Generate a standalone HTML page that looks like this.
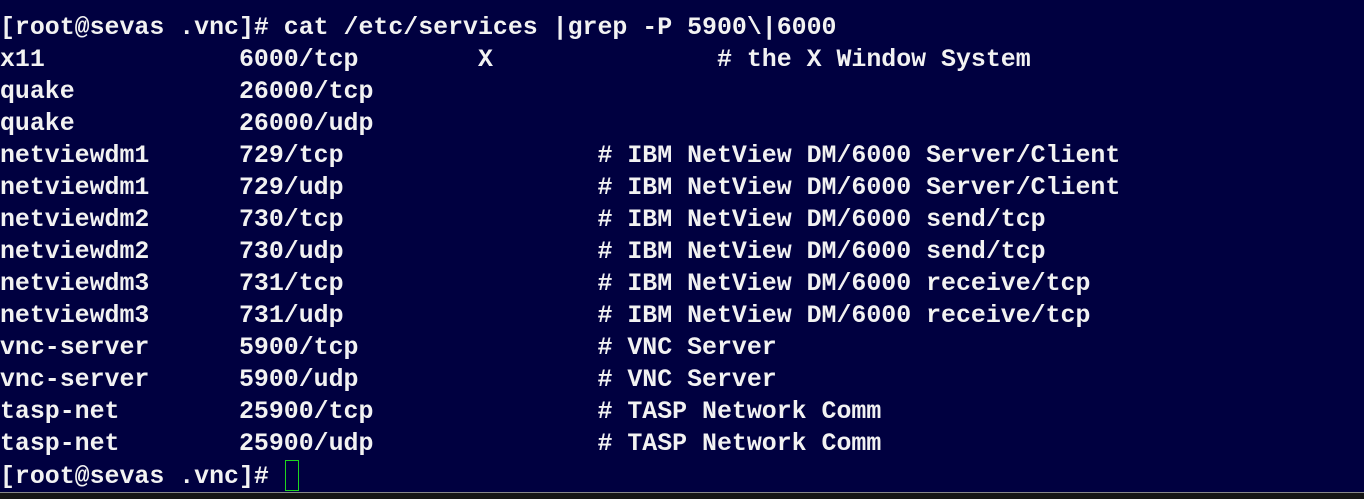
<!DOCTYPE html>
<html><head><style>
html,body{margin:0;padding:0;width:1364px;height:498px;overflow:hidden;background:#000040;}
pre{margin:0;padding:12px 0 0 0;font-family:"Liberation Mono",monospace;font-weight:bold;font-size:24.9px;line-height:32px;color:#f2f2f2;white-space:pre;}
.cur{display:inline-block;width:14px;height:31px;border:1px solid #1fd51f;vertical-align:-8px;box-sizing:border-box;margin-left:1px;}
.bot{position:absolute;left:0;top:492px;width:1364px;height:6px;background:#151515;border-top:1px solid #888;}
</style></head><body>
<pre>[root@sevas .vnc]# cat /etc/services |grep -P 5900\|6000
x11             6000/tcp        X               # the X Window System
quake           26000/tcp
quake           26000/udp
netviewdm1      729/tcp                 # IBM NetView DM/6000 Server/Client
netviewdm1      729/udp                 # IBM NetView DM/6000 Server/Client
netviewdm2      730/tcp                 # IBM NetView DM/6000 send/tcp
netviewdm2      730/udp                 # IBM NetView DM/6000 send/tcp
netviewdm3      731/tcp                 # IBM NetView DM/6000 receive/tcp
netviewdm3      731/udp                 # IBM NetView DM/6000 receive/tcp
vnc-server      5900/tcp                # VNC Server
vnc-server      5900/udp                # VNC Server
tasp-net        25900/tcp               # TASP Network Comm
tasp-net        25900/udp               # TASP Network Comm
[root@sevas .vnc]# <span class="cur"></span></pre>
<div class="bot"></div>
</body></html>
